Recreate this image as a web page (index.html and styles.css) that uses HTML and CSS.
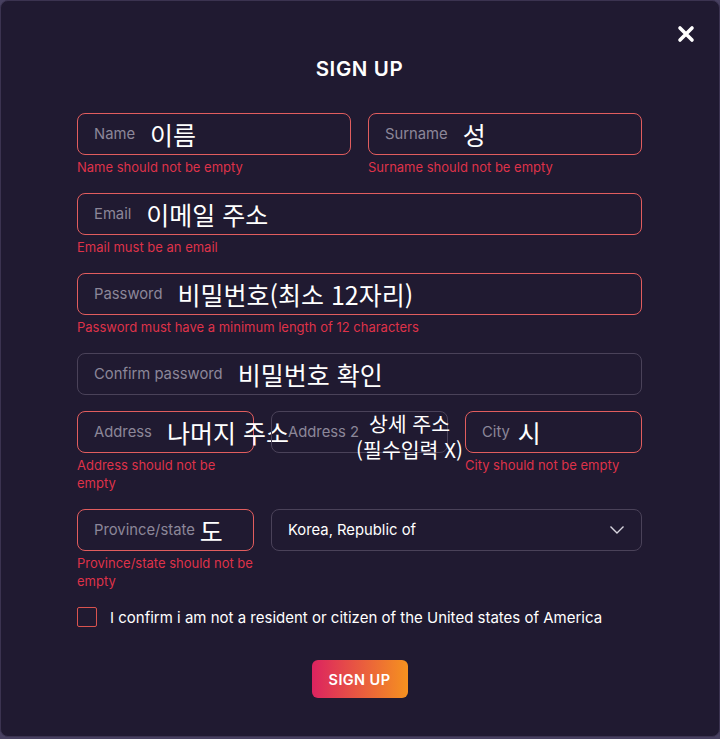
FILE: index.html
```html
<!DOCTYPE html>
<html lang="ko">
<head>
    <meta charset="UTF-8">
    <meta name="viewport" content="width=device-width, initial-scale=1.0">
    <title>Sign up</title>
    <link rel="stylesheet" href="styles.css">
</head>
<body>
    <div class="modal">
        <button class="close" type="button" aria-label="Close">
            <svg width="18" height="18" viewBox="0 0 18 18">
                <path d="M3 3 L15 15 M15 3 L3 15" stroke="#fff" stroke-width="3.6" stroke-linecap="round" fill="none"/>
            </svg>
        </button>
        <h2 class="title">SIGN UP</h2>

        <form class="form">
            <div class="row two">
                <div class="field">
                    <div class="input invalid"><span class="label">Name</span><span class="value">이름</span></div>
                    <div class="error">Name should not be empty</div>
                </div>
                <div class="field">
                    <div class="input invalid"><span class="label">Surname</span><span class="value">성</span></div>
                    <div class="error">Surname should not be empty</div>
                </div>
            </div>

            <div class="field">
                <div class="input invalid"><span class="label">Email</span><span class="value">이메일 주소</span></div>
                <div class="error">Email must be an email</div>
            </div>

            <div class="field">
                <div class="input invalid"><span class="label">Password</span><span class="value">비밀번호(최소 12자리)</span></div>
                <div class="error">Password must have a minimum length of 12 characters</div>
            </div>

            <div class="field plain">
                <div class="input"><span class="label">Confirm password</span><span class="value">비밀번호 확인</span></div>
            </div>

            <div class="row three">
                <div class="field">
                    <div class="input invalid"><span class="label">Address</span><span class="value">나머지 주소</span></div>
                    <div class="error">Address should not be empty</div>
                </div>
                <div class="field">
                    <div class="input"><span class="label">Address 2</span><span class="value note">상세 주소<br>(필수입력 X)</span></div>
                </div>
                <div class="field">
                    <div class="input invalid"><span class="label">City</span><span class="value short">시</span></div>
                    <div class="error">City should not be empty</div>
                </div>
            </div>

            <div class="row three">
                <div class="field">
                    <div class="input invalid"><span class="label">Province/state</span><span class="value tight">도</span></div>
                    <div class="error">Province/state should not be empty</div>
                </div>
                <div class="field wide">
                    <div class="input select">
                        <span class="selected">Korea, Republic of</span>
                        <svg class="chevron" width="16" height="10" viewBox="0 0 16 10">
                            <path d="M1.5 1.5 L8 8 L14.5 1.5" stroke="#d8d5df" stroke-width="1.4" fill="none"/>
                        </svg>
                    </div>
                </div>
            </div>

            <label class="confirm">
                <span class="box"></span>
                <span>I confirm i am not a resident or citizen of the United states of America</span>
            </label>

            <button class="submit" type="button">SIGN UP</button>
        </form>
    </div>
</body>
</html>
```

FILE: styles.css
```css
body {
    margin: 0;
    background-color: #474060;
    font-family: Inter, "Noto Sans", sans-serif;
}
.modal {
    position: relative;
    box-sizing: border-box;
    width: 720px;
    height: 737px;
    padding: 55px 77px 0 76px;
    background-color: #201a31;
    border: 1px solid #3b3350;
    border-radius: 8px;
    color: #fff;
}
.close {
    position: absolute;
    top: 24px;
    right: 24px;
    padding: 0;
    border: none;
    background: none;
    cursor: pointer;
}
.title {
    margin: 0;
    font-size: 20.5px;
    line-height: 26px;
    font-weight: 600;
    text-align: center;
    letter-spacing: 0.6px;
}
.form {
    display: flex;
    flex-direction: column;
    gap: 17px;
    margin-top: 31px;
}
.row {
    display: grid;
    gap: 17px;
}
.row.two { grid-template-columns: minmax(0, 1fr) minmax(0, 1fr); }
.row.three { grid-template-columns: repeat(3, minmax(0, 1fr)); }
.field { min-width: 0; }
.field.plain { margin-bottom: -1px; }
.field.wide { grid-column: span 2; }
.input {
    box-sizing: border-box;
    height: 42px;
    display: flex;
    align-items: center;
    padding: 0 16px;
    border: 1px solid #4a4259;
    border-radius: 8px;
    white-space: nowrap;
}
.input.invalid {
    border-color: #e15d5e;
}
.label {
    flex-shrink: 0;
    font-size: 14.8px;
    color: #8c8799;
}
.value {
    flex-shrink: 0;
    margin-left: 15px;
    font-family: "Noto Sans CJK KR", sans-serif;
    font-size: 25px;
    color: #fff;
}
.value.tight { margin-left: 5px; }
.value.short { margin-left: 8px; }
.value.note {
    margin-left: -3px;
    margin-top: 8px;
    font-size: 20.5px;
    line-height: 26px;
    text-align: center;
}
.error {
    margin-top: 3px;
    font-size: 13px;
    line-height: 18px;
    color: #de3249;
}
.select {
    justify-content: space-between;
    padding-right: 16px;
}
.selected {
    font-size: 14.8px;
    color: #fff;
}
.confirm {
    display: flex;
    align-items: center;
    gap: 13px;
    font-size: 15px;
    cursor: pointer;
}
.box {
    box-sizing: border-box;
    width: 20px;
    height: 20px;
    border: 1px solid #d9534f;
    border-radius: 2px;
}
.submit {
    align-self: center;
    width: 96px;
    height: 38px;
    margin-top: 16px;
    border: none;
    border-radius: 6px;
    background: linear-gradient(90deg, #dc2360, #f5921f);
    color: #fff;
    font-family: Inter, sans-serif;
    font-size: 14.5px;
    font-weight: 600;
    letter-spacing: 0.4px;
    cursor: pointer;
}
```
